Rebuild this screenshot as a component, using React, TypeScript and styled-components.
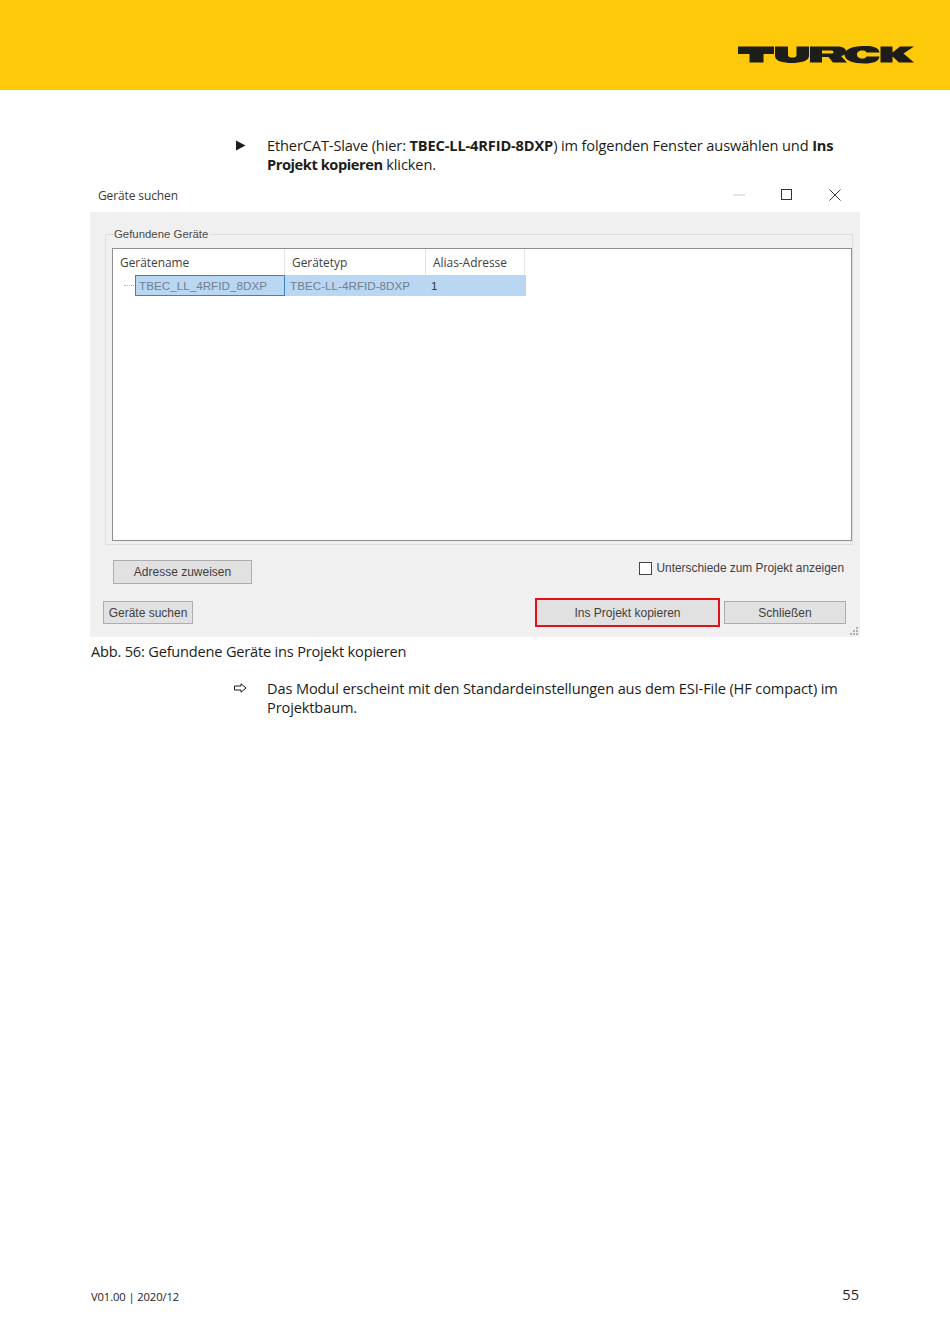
import React from "react";
import styled, { createGlobalStyle } from "styled-components";

const Global = createGlobalStyle`
  html, body { margin: 0; padding: 0; background: #fff; }
  body { font-family: "Open Sans", "Noto Sans", sans-serif; color: #1d1d1b; }
`;
const Page = styled.div`
  width: 950px; height: 1343px; display: flex; flex-direction: column; overflow: hidden;
`;
const Header = styled.header`
  height: 90px; flex: none; background: #fec90b; display: flex; align-items: flex-start; justify-content: flex-end;
  padding: 45px 36px 0 0; box-sizing: border-box;
`;
const Main = styled.main`
  flex: 1; display: flex; flex-direction: column; padding: 46px 90px 0 90px;
`;
const Step = styled.div`
  display: grid; grid-template-columns: 33px 580px; padding-left: 144px; margin-right: -10px;
`;
const Marker = styled.div<{ $inset?: number }>`
  padding: 4px 0 0 ${(p) => p.$inset ?? 0}px;
  svg { display: block; }
`;
const StepText = styled.p`
  margin: 0; font-size: 14.6px; line-height: 19px; letter-spacing: -0.13px; color: #1d1d1b;
  b { font-weight: 700; }
`;
const TightBold = styled.b`
  letter-spacing: -0.42px;
`;
const Dialog = styled.section`
  position: relative; margin-top: 6px; display: flex; flex-direction: column; height: 457px;
`;
const TitleBar = styled.div`
  height: 32px; flex: none; display: flex; align-items: center; padding: 0 19px 0 8px; background: #fff;
`;
const Title = styled.span`
  flex: 1; font-size: 12px; letter-spacing: -0.12px; color: #3a3a3a; position: relative; top: -1px;
`;
const WinIcons = styled.div`
  display: flex; gap: 36px; align-items: center; margin-top: -3px;
`;
const Body = styled.div`
  flex: 1; background: #f0f0f0; display: flex; flex-direction: column; padding: 22px 7px 0 15px;
`;
const Group = styled.fieldset`
  margin: -8px 0 0 0; padding: 6px 0 0 6px; height: 319px; box-sizing: border-box; border: 1px solid #dddddd; min-width: 0; border-radius: 1px;
`;
const Legend = styled.legend`
  margin-left: 2px; padding: 0 3px 0 0; font-family: "Liberation Sans", sans-serif; font-size: 11.4px; line-height: 16px; color: #4a4a4a;
`;
const ListView = styled.div`
  height: 293px; box-sizing: border-box; border: 1px solid #8f8f8f; background: #fff;
`;
const HeadRow = styled.div`
  display: grid; grid-template-columns: 172px 141px 99px; height: 26px; width: 412px;
`;
const HeadCell = styled.div`
  border-right: 1px solid #e4e4e4; padding: 5px 0 0 7px; font-size: 11.9px; line-height: 16px; color: #3f3f3f; box-sizing: border-box;
`;
const DataRow = styled.div`
  display: grid; grid-template-columns: 22px 150px 141px 100px; height: 21px; width: 413px;
`;
const Tree = styled.div`
  display: flex; align-items: center; padding-left: 11px;
`;
const Dots = styled.span`
  width: 10px; border-top: 1px dotted #b5b5b5;
`;
const Cell = styled.div<{ $focus?: boolean; $dark?: boolean }>`
  background: #b9d7f3; box-sizing: border-box; font-family: "Liberation Sans", sans-serif; font-size: 11.7px; line-height: 19px; white-space: nowrap;
  color: ${(p) => (p.$dark ? "#333" : "#71808e")};
  padding-left: ${(p) => (p.$focus ? "3px" : "4px")};
  border: 1px solid ${(p) => (p.$focus ? "#3a81c6" : "transparent")};
`;
const GroupFoot = styled.div`
  display: flex; align-items: flex-start; justify-content: space-between; margin: 15px 9px 0 8px;
`;
const Btn = styled.button<{ $w: number }>`
  width: ${(p) => p.$w}px; height: 24px; box-sizing: border-box; background: #e1e1e1; border: 1px solid #adadad; padding: 0;
  font-family: "Liberation Sans", sans-serif; font-size: 12px; color: #3f3f3f;
`;
const SmallBtn = styled(Btn)`
  height: 23px;
`;
const CheckLabel = styled.label`
  display: flex; align-items: center; gap: 5px; font-family: "Liberation Sans", sans-serif; font-size: 11.88px; line-height: 16px; color: #3f3f3f;
`;
const CheckBox = styled.span`
  width: 13px; height: 13px; box-sizing: border-box; border: 1.5px solid #444; background: #fff; display: block;
`;
const Actions = styled.div`
  display: flex; align-items: center; margin: 14px 7px 0 -2px; height: 29px;
`;
const Spacer = styled.div`
  flex: 1;
`;
const Highlight = styled.div`
  border: 2px solid #e3101c; margin-right: 4px; display: flex; box-sizing: border-box; height: 29px; width: 185px; background: #e1e1e1;
  button { border: none; width: 181px; height: 25px; }
`;
const Grip = styled.svg`
  position: absolute; right: 1px; bottom: 1px;
`;
const Caption = styled.p`
  margin: 4px 0 0 1px; font-size: 14.6px; line-height: 20px; letter-spacing: -0.2px; color: #1d1d1b;
`;
const ResultStep = styled(Step)`
  margin-top: 18px;
`;
const Footer = styled.footer`
  display: flex; justify-content: space-between; align-items: flex-end; padding: 0 91px 38px 91px;
`;
const Version = styled.span`
  font-size: 11.2px; line-height: 16px; color: #1d1d1b; letter-spacing: -0.1px;
`;
const PageNo = styled.span`
  font-size: 14.6px; line-height: 20px; color: #1d1d1b; position: relative; top: -1px;
`;

function Logo() {
  return (
    <svg width="176" height="20" viewBox="0 0 176 20" fill="#1d1d1b" aria-label="TURCK">
      <path d="M0 1.5H36V9H25.5V17.5H11.5V9H0Z" />
      <path d="M37 1.5H50V10C50 12 52 12.5 54.5 12.5C57 12.5 58.5 12 58.5 10V1.5H71V11C71 16 62 18 54 18C45 18 37 16 37 11Z" />
      <path fillRule="evenodd" d="M72 1.5H99C104.500 1.5 108 3 108 6.500C108 9 106 10.500 103 11L109 17.500H95L90.500 12H84V17.500H72ZM84 5.500V8.500H92.500C94.500 8.500 95.500 8 95.500 7C95.500 6 94.500 5.500 92.500 5.500Z" />
      <path d="M128 1C135 1 141 2.500 141.500 7.500H128.500C128 6 126.500 5.500 124.500 5.500C120.500 5.500 119 7.500 119 9.500C119 11.500 120.500 13.500 124.500 13.500C126.500 13.500 128 13 128.500 11.500H141.500C141 16.500 135 18.500 127 18.500C115 18.500 106.500 15.500 106.500 9.500C106.500 3.500 116 1 128 1Z" />
      <path d="M142.500 1.500H154.500V7.500L162 1.500H176L165.500 8.500L176 17.500H161L154.500 11.500V17.500H142.500Z" />
    </svg>
  );
}

export default function App() {
  return (
    <Page>
      <Global />
      <Header><Logo /></Header>
      <Main>
        <Step>
          <Marker $inset={2}>
            <svg width="10" height="11" viewBox="0 0 10 11"><path d="M0 .5L9.500 5.500L0 10.500Z" fill="#1d1d1b" /></svg>
          </Marker>
          <StepText>
            EtherCAT-Slave (hier: <b>TBEC-LL-4RFID-8DXP</b>) im folgenden Fenster auswählen und <b>Ins</b> <TightBold>Projekt kopieren</TightBold> klicken.
          </StepText>
        </Step>
        <Dialog>
          <TitleBar>
            <Title>Geräte suchen</Title>
            <WinIcons>
              <svg width="12" height="2" viewBox="0 0 12 2"><path d="M0 1H12" stroke="#c8c8c8" /></svg>
              <svg width="12" height="11" viewBox="0 0 12 11"><rect x=".5" y=".5" width="10" height="10" fill="none" stroke="#333" /></svg>
              <svg width="12" height="12" viewBox="0 0 12 12"><path d="M.5 .5L11.500 11.500M11.500 .5L.5 11.500" stroke="#333" fill="none" /></svg>
            </WinIcons>
          </TitleBar>
          <Body>
            <Group>
              <Legend>Gefundene Geräte</Legend>
              <ListView>
                <HeadRow>
                  <HeadCell>Gerätename</HeadCell>
                  <HeadCell>Gerätetyp</HeadCell>
                  <HeadCell>Alias-Adresse</HeadCell>
                </HeadRow>
                <DataRow>
                  <Tree><Dots /></Tree>
                  <Cell $focus>TBEC_LL_4RFID_8DXP</Cell>
                  <Cell>TBEC-LL-4RFID-8DXP</Cell>
                  <Cell $dark>1</Cell>
                </DataRow>
              </ListView>
            </Group>
            <GroupFoot>
              <Btn $w={139}>Adresse zuweisen</Btn>
              <CheckLabel><CheckBox />Unterschiede zum Projekt anzeigen</CheckLabel>
            </GroupFoot>
            <Actions>
              <SmallBtn $w={90}>Geräte suchen</SmallBtn>
              <Spacer />
              <Highlight><Btn $w={181}>Ins Projekt kopieren</Btn></Highlight>
              <SmallBtn $w={122}>Schließen</SmallBtn>
            </Actions>
          </Body>
          <Grip width="10" height="10" viewBox="0 0 10 10" fill="#b0b0b0">
            <rect x="7" y="1" width="2" height="2" /><rect x="4" y="4" width="2" height="2" /><rect x="7" y="4" width="2" height="2" />
            <rect x="1" y="7" width="2" height="2" /><rect x="4" y="7" width="2" height="2" /><rect x="7" y="7" width="2" height="2" />
          </Grip>
        </Dialog>
        <Caption>Abb. 56: Gefundene Geräte ins Projekt kopieren</Caption>
        <ResultStep>
          <Marker>
            <svg width="13" height="10" viewBox="0 0 13 10"><path d="M.5 3H7V.8L12 5L7 9.200V7H.5Z" fill="none" stroke="#1d1d1b" /></svg>
          </Marker>
          <StepText>Das Modul erscheint mit den Standardeinstellungen aus dem ESI-File (HF compact) im Projektbaum.</StepText>
        </ResultStep>
      </Main>
      <Footer>
        <Version>V01.00 | 2020/12</Version>
        <PageNo>55</PageNo>
      </Footer>
    </Page>
  );
}
